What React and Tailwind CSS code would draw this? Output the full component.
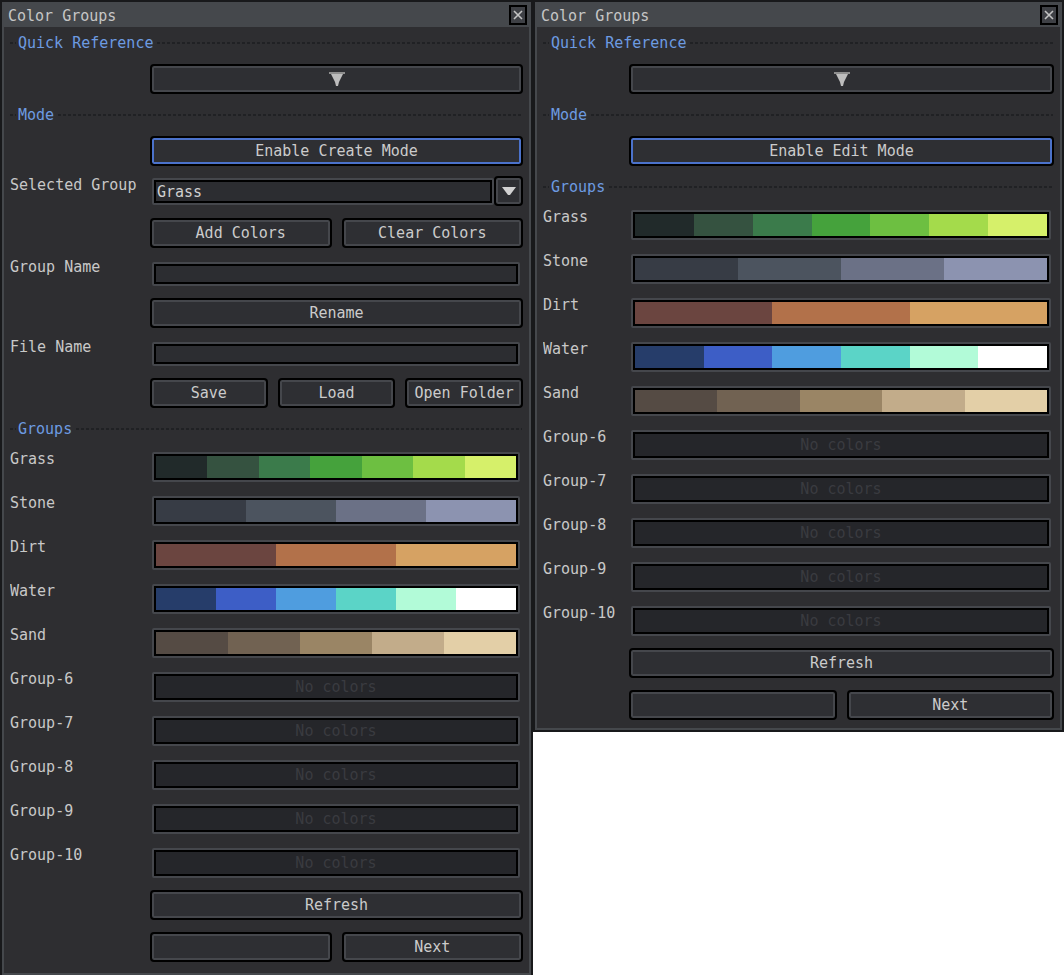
import React from 'react';

const grass = ['#212a2a', '#355240', '#3b7b4b', '#45a23c', '#6dbf41', '#a4db4b', '#d6f06a'];
const stone = ['#373c45', '#4c545f', '#6b7186', '#8c93b0'];
const dirt = ['#6b4540', '#b2714a', '#d6a263'];
const water = ['#263d6a', '#3d5ec6', '#4f9ddf', '#5bd4c7', '#b2fbd8', '#ffffff'];
const sand = ['#554b44', '#716252', '#9a8565', '#c2ac8a', '#e3cfa7'];

const groups = [
    { name: 'Grass', colors: grass },
    { name: 'Stone', colors: stone },
    { name: 'Dirt', colors: dirt },
    { name: 'Water', colors: water },
    { name: 'Sand', colors: sand },
    { name: 'Group-6', colors: [] },
    { name: 'Group-7', colors: [] },
    { name: 'Group-8', colors: [] },
    { name: 'Group-9', colors: [] },
    { name: 'Group-10', colors: [] },
];

const Btn = ({ children, blue, className = '' }) => (
    <div
        className={`h-[30px] rounded-[4px] border-2 border-black bg-[#2e2f33] flex items-center justify-center text-[#cbcbcb] leading-[16px] ${
            blue ? 'shadow-[inset_0_0_0_2px_#4b72cb]' : 'shadow-[inset_0_0_0_2px_#45474c]'
        } ${className}`}
    >
        {children}
    </div>
);

const Field = ({ children, className = '', inner = 'bg-[#2c2d31]' }) => (
    <div className={`ml-[2px] border-2 border-[#45474c] rounded-[2px] ${className}`}>
        <div className={`h-full border-2 border-black flex items-center overflow-hidden ${inner}`}>{children}</div>
    </div>
);

const Dash = ({ className = '' }) => (
    <div className={`h-[2px] bg-[repeating-linear-gradient(90deg,#202124_0px,#202124_3px,transparent_3px,transparent_5px)] ${className}`} />
);

const Header = ({ children }) => (
    <div className="flex items-center h-[22px] shrink-0">
        <Dash className="w-[6px]" />
        <span className="px-[2px] mr-[2px] text-[#6d9be1] leading-[16px]">{children}</span>
        <Dash className="flex-1 mr-[1px]" />
    </div>
);

const Row = ({ label, lw, h = 'h-[30px]', children }) => (
    <div className={`flex shrink-0 overflow-hidden ${h}`}>
        <div className={`${lw} shrink-0 leading-[16px] text-[#c8c8c8] pt-[1px]`}>{label}</div>
        <div className="flex-1 min-w-0">{children}</div>
    </div>
);

const Arrow = () => (
    <svg width="16" height="14" viewBox="0 0 16 14">
        <polygon points="0,0 16,0 16,2 14,2 10,10 9,14 7,14 6,10 2,2 0,2" fill="#bdbdbd" />
        <rect x="0" y="0" width="16" height="2" fill="#8e8e8e" />
    </svg>
);

const Swatch = ({ colors }) => (
    <Field className="h-[30px] mt-[2px] mr-[3px]" inner="bg-[#25262a]">
        {colors.length ? (
            colors.map((c) => <div key={c} className="flex-1 h-full" style={{ backgroundColor: c }} />)
        ) : (
            <div className="flex-1 text-center text-[#3a3b40] leading-[16px]">No colors</div>
        )}
    </Field>
);

const Window = ({ className, children }) => (
    <div className={`shrink-0 flex flex-col border-2 border-[#18191b] bg-[#45484c] ${className}`}>
        <div className="h-[25px] shrink-0 flex items-center justify-between pl-[6px] pr-[4px]">
            <span className="text-[#c6c6c6] leading-[16px] pt-[2px]">Color Groups</span>
            <div className="w-[18px] h-[20px] border-2 border-black bg-[#3e4045] flex items-center justify-center">
                <svg width="10" height="10" viewBox="0 0 10 10">
                    <path d="M1 1L9 9M9 1L1 9" stroke="#c4c4c4" strokeWidth="1.6" />
                </svg>
            </div>
        </div>
        <div className="flex-1 min-h-0 mx-[2px] mb-[2px] bg-[#2e2e31] pl-[6px] pr-[6px] pt-[5px] flex flex-col gap-[10px]">
            {children}
        </div>
    </div>
);

const GroupRows = ({ lw }) =>
    groups.map((g) => (
        <Row key={g.name} label={g.name} lw={lw} h="h-[34px]">
            <Swatch colors={g.colors} />
        </Row>
    ));

const App = () => {
    const lw = 'w-[140px]';
    const rw = 'w-[86px]';

    return (
        <div className="w-[1064px] h-[975px] bg-white flex items-start font-['DejaVu_Sans_Mono','Liberation_Mono',monospace] text-[15px] leading-[16px] overflow-hidden">
            <Window className="w-[533px] h-[977px]">
                <Header>Quick Reference</Header>
                <Row lw={lw}>
                    <Btn><Arrow /></Btn>
                </Row>
                <Header>Mode</Header>
                <Row lw={lw}>
                    <Btn blue>Enable Create Mode</Btn>
                </Row>
                <Row label="Selected Group" lw={lw} h="h-[32px]">
                    <div className="flex items-start h-[30px]">
                        <Field className="flex-1 h-[27px] mt-[2px]">
                            <span className="pl-[1px] text-[#d0d0d0] leading-[16px]">Grass</span>
                        </Field>
                        <Btn className="w-[29px]">
                            <svg width="14" height="8" viewBox="0 0 14 8">
                                <polygon points="0,0 14,0 8,8 6,8" fill="#d2d2d2" />
                            </svg>
                        </Btn>
                    </div>
                </Row>
                <Row lw={lw}>
                    <div className="grid grid-cols-2 gap-[10px]">
                        <Btn>Add Colors</Btn>
                        <Btn>Clear Colors</Btn>
                    </div>
                </Row>
                <Row label="Group Name" lw={lw} h="h-[30px]">
                    <Field className="h-[24px] mt-[4px] mr-[3px]" />
                </Row>
                <Row lw={lw}>
                    <Btn>Rename</Btn>
                </Row>
                <Row label="File Name" lw={lw} h="h-[30px]">
                    <Field className="h-[24px] mt-[4px] mr-[3px]" />
                </Row>
                <Row lw={lw}>
                    <div className="grid grid-cols-3 gap-[10px]">
                        <Btn>Save</Btn>
                        <Btn>Load</Btn>
                        <Btn>Open Folder</Btn>
                    </div>
                </Row>
                <Header>Groups</Header>
                <GroupRows lw={lw} />
                <Row lw={lw} h="h-[32px]">
                    <Btn>Refresh</Btn>
                </Row>
                <Row lw={lw}>
                    <div className="grid grid-cols-2 gap-[10px]">
                        <Btn />
                        <Btn>Next</Btn>
                    </div>
                </Row>
            </Window>

            <Window className="w-[531px] h-[732px]">
                <Header>Quick Reference</Header>
                <Row lw={rw}>
                    <Btn><Arrow /></Btn>
                </Row>
                <Header>Mode</Header>
                <Row lw={rw}>
                    <Btn blue>Enable Edit Mode</Btn>
                </Row>
                <Header>Groups</Header>
                <GroupRows lw={rw} />
                <Row lw={rw} h="h-[32px]">
                    <Btn>Refresh</Btn>
                </Row>
                <Row lw={rw}>
                    <div className="grid grid-cols-2 gap-[10px]">
                        <Btn />
                        <Btn>Next</Btn>
                    </div>
                </Row>
            </Window>
        </div>
    );
};

export default App;
